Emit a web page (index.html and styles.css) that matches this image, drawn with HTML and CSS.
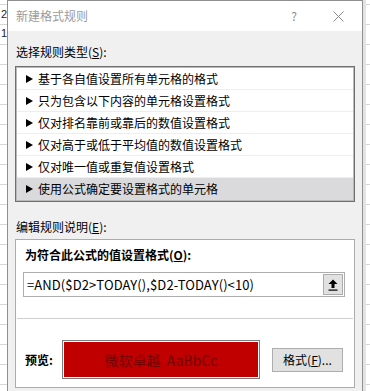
FILE: index.html
```html
<!DOCTYPE html>
<html lang="zh-CN">
<head>
<meta charset="utf-8">
<title>新建格式规则</title>
<link rel="stylesheet" href="styles.css">
</head>
<body>
<div class="desk">
  <div class="sheet sheet-left">
    <div class="cell">2</div>
    <div class="cell">1</div>
  </div>
  <div class="dialog">
    <div class="titlebar">
      <span class="title">新建格式规则</span>
      <span class="help">?</span>
      <svg class="close" width="11" height="11" viewBox="0 0 11 11"><path d="M0.5 0.5L10.5 10.5M10.5 0.5L0.5 10.5" stroke="#8a8a8a" stroke-width="1" fill="none"/></svg>
    </div>
    <div class="content">
      <div class="label">选择规则类型(<u>S</u>):</div>
      <ul class="rules">
        <li><span class="tri"></span>基于各自值设置所有单元格的格式</li>
        <li><span class="tri"></span>只为包含以下内容的单元格设置格式</li>
        <li><span class="tri"></span>仅对排名靠前或靠后的数值设置格式</li>
        <li><span class="tri"></span>仅对高于或低于平均值的数值设置格式</li>
        <li><span class="tri"></span>仅对唯一值或重复值设置格式</li>
        <li class="selected"><span class="tri"></span>使用公式确定要设置格式的单元格</li>
      </ul>
      <div class="label label-edit">编辑规则说明(<u>E</u>):</div>
      <div class="editbox">
        <div class="bold-label">为符合此公式的值设置格式(<u>O</u>):</div>
        <div class="formula">
          <span class="ftext">=AND($D2&gt;TODAY(),$D2-TODAY()&lt;10)</span>
          <span class="refbtn">
            <svg width="10" height="12" viewBox="0 0 10 12"><path d="M5 0.5L9.5 5H6.5V9H3.5V5H0.5Z" fill="#000"/><rect x="0.5" y="10.5" width="9" height="1.2" fill="#000"/></svg>
          </span>
        </div>
        <div class="sep"></div>
        <div class="preview-row">
          <span class="bold-label preview-label">预览:</span>
          <div class="preview"><div class="preview-inner">微软卓越&nbsp; AaBbCc</div></div>
          <span class="fmtbtn">格式(<u>F</u>)...</span>
        </div>
      </div>
    </div>
  </div>
  <div class="sheet sheet-right"></div>
</div>
</body>
</html>
```

FILE: styles.css
```css
html, body {
  margin: 0;
  padding: 0;
}
body {
  width: 370px;
  height: 391px;
  overflow: hidden;
  font-family: "Noto Sans CJK SC", "Noto Sans", sans-serif;
  font-size: 12px;
  color: #000;
}
.desk {
  display: flex;
  height: 391px;
  overflow: hidden;
}
.sheet {
  background-color: #fff;
  background-image: repeating-linear-gradient(to bottom, transparent 0, transparent 4px, #d6d6d6 4px, #d6d6d6 5px, transparent 5px, transparent 20px);
}
.sheet-left {
  width: 7px;
  flex: none;
  overflow: hidden;
  padding-top: 5px;
}
.cell {
  height: 19px;
  line-height: 19px;
  font-family: "Liberation Sans", sans-serif;
  font-size: 11px;
  color: #222;
  text-align: right;
  white-space: nowrap;
}
.sheet-right {
  width: 7px;
  flex: none;
  border-left: 3px solid #e4e4e4;
  box-sizing: border-box;
}
.dialog {
  width: 356px;
  flex: none;
  box-sizing: border-box;
  border: 1px solid #8f8f8f;
  border-bottom: none;
  background: #f0f0f0;
  display: flex;
  flex-direction: column;
}
.titlebar {
  height: 30px;
  background: #fff;
  display: flex;
  align-items: center;
  padding-left: 8px;
}
.title {
  flex: 1;
  color: #9a9a9a;
  font-size: 12px;
  line-height: 18px;
}
.help {
  color: #8a8a8a;
  font-size: 12px;
  line-height: 18px;
  margin-right: 36px;
}
.close {
  margin-right: 18px;
  display: block;
}
.content {
  padding: 12px 7px 0 7px;
}
.label {
  line-height: 18px;
  padding-left: 1px;
}
.rules {
  list-style: none;
  margin: 5px 0 0 0;
  padding: 0;
  background: #fff;
  border: 1px solid #6f6f6f;
  box-shadow: inset 0 0 0 1px #b9b9b9;
  padding: 1px;
}
.rules li {
  height: 21px;
  border-bottom: 1px solid #eeeeee;
  display: flex;
  align-items: center;
  padding-left: 9px;
  line-height: 18px;
}
.rules li:last-child {
  border-bottom: none;
  height: 22px;
}
.rules li.selected {
  background: #dadadd;
}
.tri {
  width: 0;
  height: 0;
  border-left: 7px solid #000;
  border-top: 4px solid transparent;
  border-bottom: 4px solid transparent;
  margin-right: 5px;
}
.label-edit {
  margin-top: 16px;
}
.editbox {
  margin-top: 3px;
  background: #fff;
  border: 1px solid #acacac;
  padding: 6px 9px 8px 7px;
}
.bold-label {
  font-weight: bold;
  line-height: 18px;
  padding-left: 2px;
}
.formula {
  margin-top: 8px;
  height: 25px;
  box-sizing: border-box;
  border: 1px solid #adadad;
  display: flex;
  align-items: center;
  padding-left: 3px;
}
.ftext {
  flex: 1;
  font-size: 13px;
  line-height: 18px;
  letter-spacing: 0.1px;
}
.refbtn {
  width: 20px;
  height: 21px;
  box-sizing: border-box;
  background: #e1e1e1;
  border: 1px solid #adadad;
  margin-right: 1px;
  display: flex;
  align-items: center;
  justify-content: center;
}
.refbtn svg {
  display: block;
}
.sep {
  margin: 21px -8px 0 -6px;
  height: 1px;
  background: #cfcfcf;
}
.preview-row {
  margin-top: 21px;
  height: 39px;
  display: flex;
  align-items: center;
}
.preview-label {
  width: 37px;
}
.preview {
  width: 198px;
  height: 39px;
  box-sizing: border-box;
  border: 1px solid #7c7c7c;
  padding: 1px;
  background: #fff;
}
.preview-inner {
  height: 100%;
  background: #c00000;
  color: #6e0000;
  font-size: 14px;
  display: flex;
  align-items: center;
  justify-content: center;
}
.fmtbtn {
  margin-left: 12px;
  width: 71px;
  height: 24px;
  box-sizing: border-box;
  background: #e1e1e1;
  border: 1px solid #adadad;
  display: flex;
  align-items: center;
  justify-content: center;
  line-height: 18px;
}
```
